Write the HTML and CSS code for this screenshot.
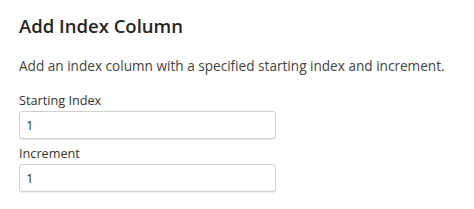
FILE: index.html
```html
<!DOCTYPE html>
<html lang="en">
<head>
    <meta charset="UTF-8">
    <meta name="viewport" content="width=device-width, initial-scale=1.0">
    <title>Add Index Column</title>
    <link rel="stylesheet" href="styles.css">
</head>
<body>
    <div class="dialog">
        <h1>Add Index Column</h1>
        <p class="description">Add an index column with a specified starting index and increment.</p>
        <div class="field">
            <label for="start-index">Starting Index</label>
            <input type="text" id="start-index" value="1">
        </div>
        <div class="field">
            <label for="increment">Increment</label>
            <input type="text" id="increment" value="1">
        </div>
    </div>
</body>
</html>
```

FILE: styles.css
```css
body {
    margin: 0;
    font-family: 'Open Sans', sans-serif;
    background-color: #fff;
    color: #333;
}
.dialog {
    padding: 11px 19px;
}
h1 {
    font-size: 18.5px;
    font-weight: 600;
    color: #252525;
    margin: 0 0 15px 0;
    line-height: 30px;
}
.description {
    font-size: 13.6px;
    color: #444;
    margin: 0 0 14px 0;
    line-height: 20px;
}
.field {
    display: flex;
    flex-direction: column;
    margin-bottom: 4px;
}
.field label {
    font-size: 12.7px;
    color: #333;
    line-height: 20px;
    margin-bottom: 1px;
}
.field input {
    width: 257px;
    height: 28px;
    box-sizing: border-box;
    padding: 0 6px;
    border: 1px solid #cfcfcf;
    border-radius: 3px;
    box-shadow: 0 1px 1px rgba(0,0,0,0.08);
    font-family: 'Open Sans', sans-serif;
    font-size: 13px;
    color: #333;
}
```
